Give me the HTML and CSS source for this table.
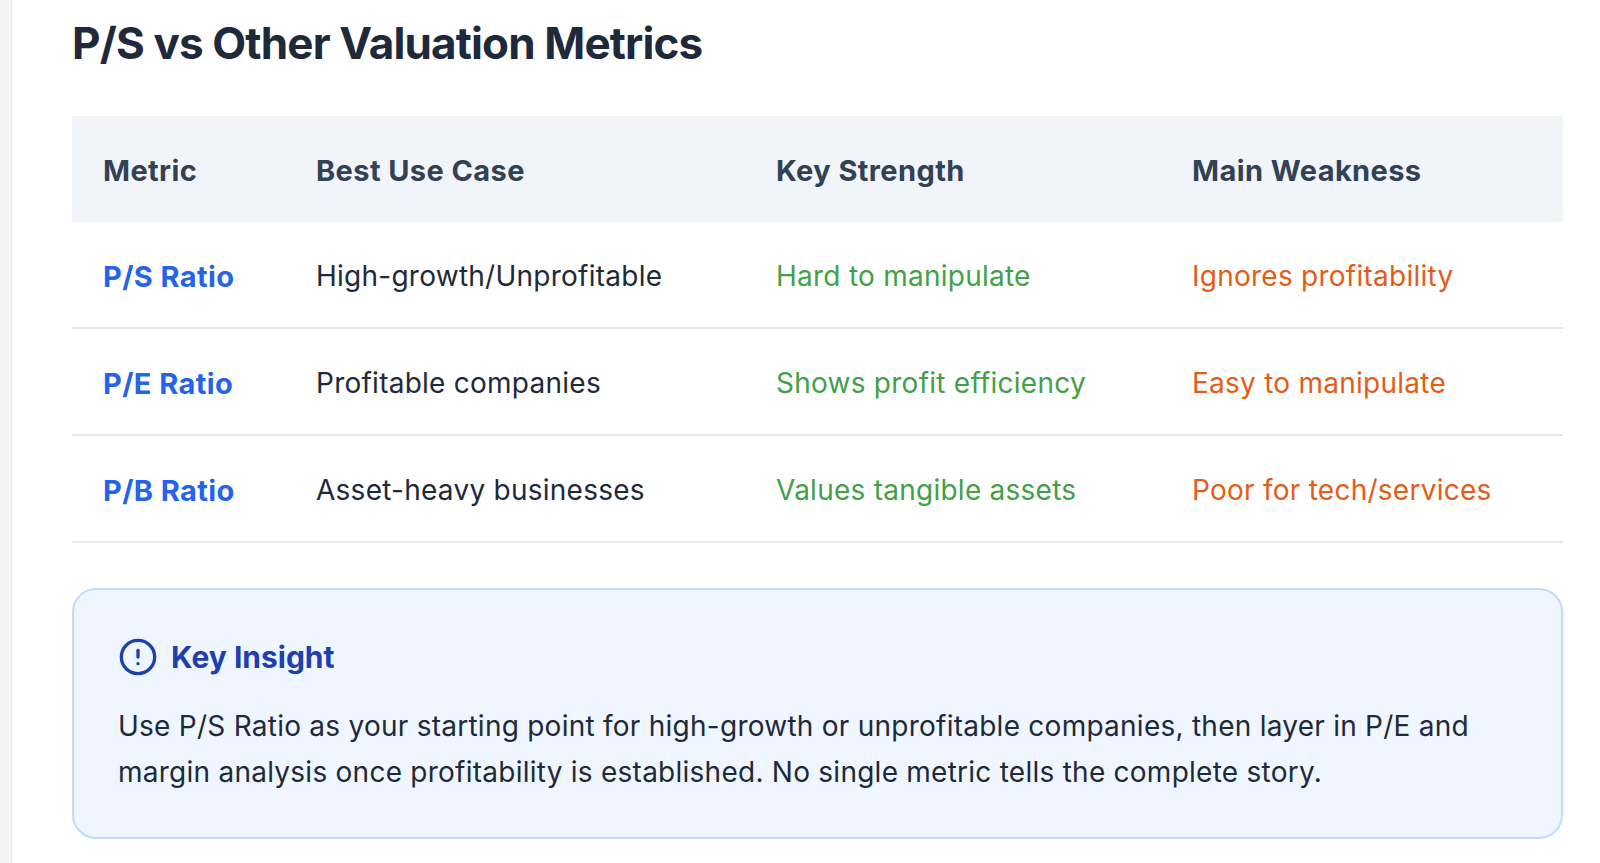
FILE: index.html
```html
<!DOCTYPE html>
<html lang="en">
<head>
<meta charset="utf-8">
<title>P/S vs Other Valuation Metrics</title>
<link rel="stylesheet" href="styles.css">
</head>
<body>
<div class="layout">
  <aside class="rail"></aside>
  <main class="content">
    <h1 class="title">P/S vs Other Valuation Metrics</h1>
    <table class="metrics">
      <colgroup>
        <col class="c-metric">
        <col class="c-use">
        <col class="c-strength">
        <col class="c-weak">
      </colgroup>
      <thead>
        <tr>
          <th>Metric</th>
          <th>Best Use Case</th>
          <th>Key Strength</th>
          <th>Main Weakness</th>
        </tr>
      </thead>
      <tbody>
        <tr>
          <td class="metric">P/S Ratio</td>
          <td>High-growth/Unprofitable</td>
          <td class="good">Hard to manipulate</td>
          <td class="bad">Ignores profitability</td>
        </tr>
        <tr>
          <td class="metric">P/E Ratio</td>
          <td>Profitable companies</td>
          <td class="good">Shows profit efficiency</td>
          <td class="bad">Easy to manipulate</td>
        </tr>
        <tr>
          <td class="metric">P/B Ratio</td>
          <td>Asset-heavy businesses</td>
          <td class="good">Values tangible assets</td>
          <td class="bad">Poor for tech/services</td>
        </tr>
      </tbody>
    </table>
    <section class="insight">
      <div class="insight-head">
        <svg class="insight-icon" viewBox="0 0 24 24" fill="none" stroke="currentColor" stroke-width="2" stroke-linecap="round" stroke-linejoin="round" aria-hidden="true">
          <circle cx="12" cy="12" r="10"></circle>
          <line x1="12" y1="8" x2="12" y2="12"></line>
          <line x1="12" y1="16" x2="12.01" y2="16"></line>
        </svg>
        <h2 class="insight-title">Key Insight</h2>
      </div>
      <p class="insight-text">Use P/S Ratio as your starting point for high-growth or unprofitable companies, then layer in P/E and margin analysis once profitability is established. No single metric tells the complete story.</p>
    </section>
  </main>
</div>
</body>
</html>
```
FILE: styles.css
```css
* { box-sizing: border-box; }

html, body {
  margin: 0;
  padding: 0;
  background: #ffffff;
  font-family: Inter, "Noto Sans", "Liberation Sans", sans-serif;
  color: #1e293b;
}

.layout {
  display: flex;
  min-height: 863px;
}

.rail {
  flex: 0 0 12px;
  background: #f3f4f6;
  border-right: 1px solid #e8eaee;
}

.content {
  flex: 1;
  padding: 17px 37px 0 60px;
}

.title {
  margin: 0 0 47px;
  font-size: 44px;
  line-height: 52px;
  font-weight: 700;
  color: #1e293b;
  letter-spacing: -0.85px;
}

.metrics {
  width: 100%;
  border-collapse: collapse;
  table-layout: fixed;
  font-size: 28px;
}

.c-metric { width: 213px; }
.c-use { width: 460px; }
.c-strength { width: 416px; }
.c-weak { width: 402px; }

.metrics th {
  text-align: left;
  background: #f1f5f9;
  color: #334155;
  font-size: 29px;
  font-weight: 700;
  letter-spacing: 0.4px;
  line-height: 41px;
  padding: 34px 31px 31px 31px;
}

.metrics td {
  line-height: 41px;
  padding: 34px 31px 30px 31px;
  border-bottom: 2px solid #e5e7eb;
  color: #1e293b;
  white-space: nowrap;
  letter-spacing: 0.25px;
}

.metrics td.metric {
  color: #2563eb;
  font-size: 29px;
  font-weight: 700;
  letter-spacing: 0.4px;
}

.metrics td.good { color: #43a047; }
.metrics td.bad { color: #e25d17; }

.insight {
  margin-top: 45px;
  background: #eff6ff;
  border: 2px solid #bfdbfe;
  border-radius: 24px;
  padding: 47px 44px 42px;
}

.insight-head {
  display: flex;
  align-items: center;
  gap: 13px;
}

.insight-icon {
  width: 40px;
  height: 40px;
  color: #1e40af;
  flex: 0 0 40px;
}

.insight-title {
  margin: 0;
  font-size: 30px;
  line-height: 40px;
  font-weight: 700;
  color: #1e40af;
}

.insight-text {
  margin: 27px 0 0;
  font-size: 28px;
  line-height: 45.5px;
  color: #1e293b;
  letter-spacing: 0.25px;
}
```
